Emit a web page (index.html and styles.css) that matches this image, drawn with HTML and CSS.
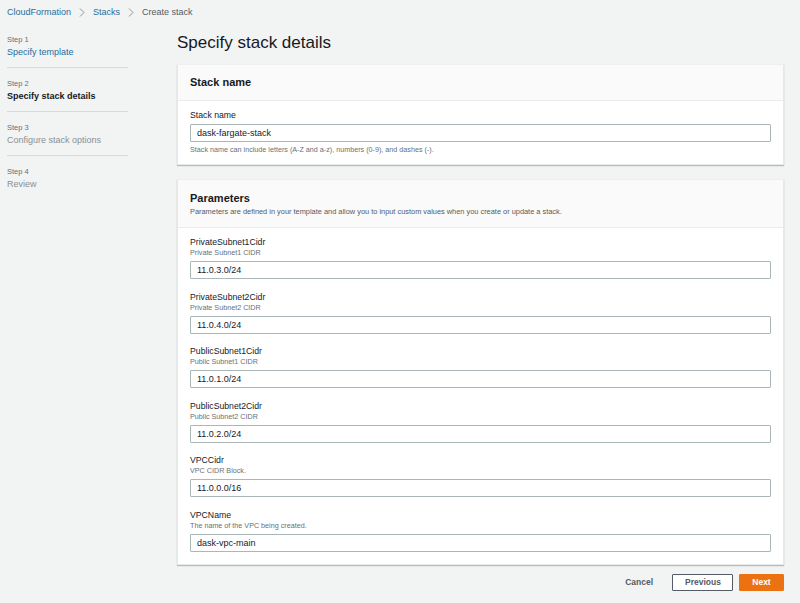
FILE: index.html
```html
<!DOCTYPE html>
<html>
<head>
<meta charset="utf-8">
<link rel="stylesheet" href="styles.css">
</head>
<body>
<div class="page">
  <nav class="crumbs">
    <a class="crumb-link">CloudFormation</a>
    <svg class="chev" width="6" height="9" viewBox="0 0 6 9"><path d="M1 0.5 L5 4.5 L1 8.5" fill="none" stroke="#8d9699" stroke-width="1"/></svg>
    <a class="crumb-link">Stacks</a>
    <svg class="chev" width="6" height="9" viewBox="0 0 6 9"><path d="M1 0.5 L5 4.5 L1 8.5" fill="none" stroke="#8d9699" stroke-width="1"/></svg>
    <span class="crumb-current">Create stack</span>
  </nav>
  <div class="layout">
    <aside class="steps">
      <div class="step">
        <div class="step-num">Step 1</div>
        <div class="step-title link">Specify template</div>
      </div>
      <div class="step">
        <div class="step-num">Step 2</div>
        <div class="step-title active">Specify stack details</div>
      </div>
      <div class="step">
        <div class="step-num">Step 3</div>
        <div class="step-title muted">Configure stack options</div>
      </div>
      <div class="step last">
        <div class="step-num">Step 4</div>
        <div class="step-title muted">Review</div>
      </div>
    </aside>
    <main class="main">
      <h1 class="title">Specify stack details</h1>
      <section class="card">
        <header class="card-head">
          <h2 class="card-title">Stack name</h2>
        </header>
        <div class="card-body">
          <div class="field">
            <div class="label">Stack name</div>
            <div class="input">dask-fargate-stack</div>
            <div class="hint">Stack name can include letters (A-Z and a-z), numbers (0-9), and dashes (-).</div>
          </div>
        </div>
      </section>
      <section class="card params">
        <header class="card-head">
          <h2 class="card-title">Parameters</h2>
          <p class="card-desc">Parameters are defined in your template and allow you to input custom values when you create or update a stack.</p>
        </header>
        <div class="card-body fields">
          <div class="field">
            <div class="label">PrivateSubnet1Cidr</div>
            <div class="desc">Private Subnet1 CIDR</div>
            <div class="input">11.0.3.0/24</div>
          </div>
          <div class="field">
            <div class="label">PrivateSubnet2Cidr</div>
            <div class="desc">Private Subnet2 CIDR</div>
            <div class="input">11.0.4.0/24</div>
          </div>
          <div class="field">
            <div class="label">PublicSubnet1Cidr</div>
            <div class="desc">Public Subnet1 CIDR</div>
            <div class="input">11.0.1.0/24</div>
          </div>
          <div class="field">
            <div class="label">PublicSubnet2Cidr</div>
            <div class="desc">Public Subnet2 CIDR</div>
            <div class="input">11.0.2.0/24</div>
          </div>
          <div class="field">
            <div class="label">VPCCidr</div>
            <div class="desc">VPC CIDR Block.</div>
            <div class="input">11.0.0.0/16</div>
          </div>
          <div class="field">
            <div class="label">VPCName</div>
            <div class="desc">The name of the VPC being created.</div>
            <div class="input">dask-vpc-main</div>
          </div>
        </div>
      </section>
      <div class="actions">
        <button class="btn btn-link">Cancel</button>
        <button class="btn btn-normal">Previous</button>
        <button class="btn btn-primary">Next</button>
      </div>
    </main>
  </div>
</div>
</body>
</html>
```

FILE: styles.css
```css
* { box-sizing: border-box; }
html, body {
  margin: 0;
  padding: 0;
  background: #f2f3f3;
  font-family: "Liberation Sans", Arial, sans-serif;
  color: #16191f;
}
.page {
  padding: 6px 16px 0 7px;
}
.crumbs {
  display: flex;
  align-items: center;
  gap: 8px;
  height: 13px;
  font-size: 9px;
  line-height: 13px;
}
.crumb-link { color: #1f6f9f; }
.crumb-current { color: #545b64; }

.layout {
  display: flex;
  gap: 49px;
  margin-top: 5px;
}
.steps {
  width: 121px;
  flex: none;
}
.step {
  padding: 10px 0 9px;
  border-bottom: 1px solid #d5dbdb;
}
.step.last { border-bottom: none; }
.step-num {
  font-size: 7.5px;
  line-height: 12px;
  color: #687078;
}
.step-title {
  font-size: 9px;
  line-height: 12px;
}
.step-title.link { color: #1f6f9f; }
.step-title.active { font-weight: bold; color: #16191f; }
.step-title.muted { color: #879196; }

.main {
  flex: 1;
  padding-top: 8px;
}
.title {
  margin: 0 0 10px;
  font-size: 17px;
  line-height: 22px;
  font-weight: normal;
  color: #16191f;
}
.card {
  background: #fff;
  border: 1px solid #e6e9ea;
  border-top-color: #eef0f0;
  box-shadow: 0 1px 1px rgba(0, 28, 36, 0.25);
  margin-bottom: 14px;
}
.card-head {
  background: #fafafa;
  border-bottom: 1px solid #eaeded;
  padding: 10px 12px;
}
.card-title {
  margin: 0;
  font-size: 11px;
  line-height: 15px;
  font-weight: bold;
}
.params .card-head {
  padding: 11px 12px 10px;
}
.card-desc {
  margin: 1px 0 0;
  font-size: 7.4px;
  line-height: 10px;
  color: #545b64;
}
.card-body {
  padding: 8px 12px 9px;
}
.fields {
  display: flex;
  flex-direction: column;
  gap: 11.6px;
  padding: 8px 12px 12px;
}
.label {
  font-size: 8.7px;
  line-height: 12px;
  color: #16191f;
}
.desc {
  font-size: 7.2px;
  line-height: 10px;
  color: #687078;
}
.input {
  margin-top: 3px;
  height: 18px;
  border: 1px solid #aab7b8;
  border-radius: 1px;
  padding: 0 6px;
  font-size: 9px;
  line-height: 16px;
  color: #16191f;
}
.hint {
  margin-top: 3px;
  font-size: 7.2px;
  line-height: 10px;
  color: #687078;
}
.actions {
  display: flex;
  justify-content: flex-end;
  align-items: center;
  gap: 6px;
  margin-top: -5px;
}
.btn {
  font-family: "Liberation Sans", Arial, sans-serif;
  font-size: 8.5px;
  font-weight: bold;
  height: 17px;
  line-height: 15px;
  padding: 0 12px;
  border-radius: 1px;
  cursor: pointer;
}
.btn-link {
  background: none;
  border: 1px solid transparent;
  color: #545b64;
}
.btn-normal {
  background: #fff;
  border: 1px solid #545b64;
  color: #545b64;
  width: 61px;
}
.btn-primary {
  background: #ec7211;
  border: 1px solid #ec7211;
  color: #fff;
  width: 45px;
}
```
